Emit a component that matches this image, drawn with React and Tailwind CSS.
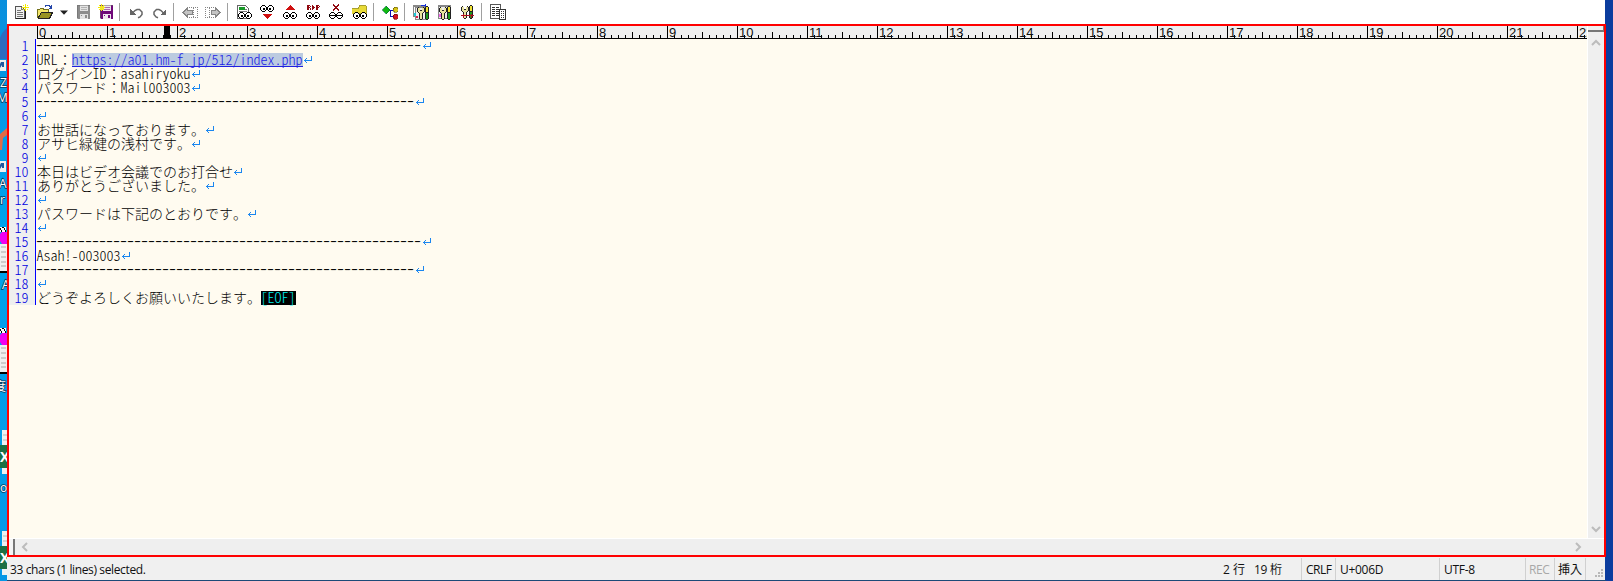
import React from 'react';

const DASH = (n) => '-'.repeat(n);

const LINES = [
  { dash: 55 },
  { parts: [['l', 'URL'], ['j', '：'], ['u', 'https://a01.hm-f.jp/512/index.php']] },
  { parts: [['j', 'ログイン'], ['l', 'ID'], ['j', '：'], ['l', 'asahiryoku']] },
  { parts: [['j', 'パスワード：'], ['l', 'Mail003003']] },
  { dash: 54 },
  {},
  { parts: [['j', 'お世話になっております。']] },
  { parts: [['j', 'アサヒ緑健の浅村です。']] },
  {},
  { parts: [['j', '本日はビデオ会議でのお打合せ']] },
  { parts: [['j', 'ありがとうございました。']] },
  {},
  { parts: [['j', 'パスワードは下記のとおりです。']] },
  {},
  { dash: 55 },
  { parts: [['l', 'Asah!-003003']] },
  { dash: 54 },
  {},
  { parts: [['j', 'どうぞよろしくお願いいたします。'], ['e', '[EOF]']], eof: true },
];

const LATIN = "inline-block -translate-x-[0.5px] -translate-y-px whitespace-pre font-['Noto_Sans_CJK_JP',monospace] text-[14px] font-light leading-[14px] [font-feature-settings:'hwid'] [font-kerning:none]";

function Return() {
  return (
    <svg className="h-[14px] w-[9px] shrink-0" viewBox="0 0 9 14" fill="none" stroke="#1a86f0" strokeWidth="1" shapeRendering="crispEdges">
      <path d="M8.5 3v5M9 7.5H1M3.5 5v1M2.5 6v1M1.5 7v1M2.5 8v1M3.5 9v1" />
    </svg>
  );
}

function Part({ kind, text }) {
  if (kind === 'j')
    return <span className="block -translate-y-px whitespace-pre font-['Noto_Sans_CJK_JP',sans-serif] text-[14px] font-light leading-[14px] [font-kerning:none] [text-spacing-trim:space-all]">{text}</span>;
  if (kind === 'u')
    return (
      <span className="flex h-[14px] border-b border-[#2020e0] bg-[#bccbe0] text-[#1c1ce6]">
        <span className={LATIN}>{text}</span>
      </span>
    );
  if (kind === 'e')
    return (
      <span className="flex h-[14px] bg-black text-[#00f0f0]">
        <span className={LATIN}>{text}</span>
      </span>
    );
  return <span className={LATIN}>{text}</span>;
}

function Line({ line, n }) {
  return (
    <div className="flex h-[14px]">
      <div className="flex w-[27px] justify-end border-r border-[#0000ff] bg-[#efefef] pr-[6px] text-[#0000e0]">
        <span className={LATIN}>{n}</span>
      </div>
      <div className="flex pl-px text-black">
        {line.dash && (
          <span className="block origin-[50%_50%] -translate-x-px -translate-y-px scale-y-[0.6] whitespace-pre font-['Liberation_Sans',sans-serif] text-[21.02px] leading-[14px]">
            {DASH(line.dash)}
          </span>
        )}
        {line.parts && line.parts.map(([k, t], i) => <Part key={i} kind={k} text={t} />)}
        {!line.eof && <Return />}
      </div>
    </div>
  );
}

function Ruler() {
  const ticks = [];
  for (let i = 0; i <= 221; i++) {
    const h = i % 10 === 0 ? 12 : i % 5 === 0 ? 6 : 3;
    ticks.push(<rect key={i} x={28 + i * 7} y={12 - h} width="1" height={h} />);
  }
  return (
    <svg className="block h-[13px] w-[1578px] shrink-0 bg-[#efefef]" viewBox="0 0 1578 13" shapeRendering="crispEdges">
      {ticks}
      <rect x="28" y="12" width="1550" height="1" />
      <rect x="155" y="0" width="6" height="12" />
      {Array.from({ length: 23 }, (_, i) => (
        <text key={i} x={30 + i * 70} y="11" fontSize="13" fontFamily="Liberation Sans" fill="#111">{i}</text>
      ))}
    </svg>
  );
}

function Icon({ children, className = '' }) {
  return (
    <svg className={'h-4 w-4 shrink-0 ' + className} viewBox="0 0 16 16" fill="none" shapeRendering="crispEdges">
      {children}
    </svg>
  );
}

const Sep = ({ className }) => <div className={'h-[18px] w-px shrink-0 bg-[#a0a0a0] ' + className} />;

function Eyes({ x = 1, y = 8, crossed }) {
  return (
    <g transform={`translate(${x} ${y})`}>
      {[0, 7].map((d) => (
        <g key={d} transform={`translate(${d} 0)`}>
          <path d="M2 0h3v1h1v1h1v3h-1v1h-1v1H2v-1H1V5H0V2h1V1h1z" fill="#000" />
          <path d="M2 1h3v1h1v3h-1v1H2V5H1V2h1z" fill="#fff" />
          {crossed ? <path d="M1 3h5v1H1z" fill="#000" /> : <path d={d ? 'M2 3h2v2H2z' : 'M3 3h2v2H3z'} fill="#000" />}
        </g>
      ))}
    </g>
  );
}

function Star({ x, y }) {
  return (
    <path transform={`translate(${x} ${y})`} d="M3.5 0v7M0 3.5h7M1 1l1 1M5 5l1 1M6 1L5 2M2 5L1 6" stroke="#f4ec00" strokeWidth="1" />
  );
}

function Floppy({ body, light }) {
  return (
    <g>
      <path d="M2 1h13v14H3l-1-1z" fill={body} />
      <path d="M5 1h8v6H5z" fill={light} />
      <path d="M6 3h6v1H6zM6 5h6v1H6z" fill={body} opacity=".55" />
      <path d="M5 10h8v5H5z" fill={light} />
      <path d="M10 11h2v3h-2zM6 11h1v1H6z" fill={body} />
      <path d="M2.5 15V1.5H15" stroke="#666" opacity=".5" />
    </g>
  );
}

function Tools() {
  return (
    <g>
      <path d="M2 3h1v4H2zM3 2h1v1H3zM8 2h1v1H8zM9 3h1v4H9zM3 7h1v1H3zM8 7h1v1H8zM4 8h1v6H4zM7 8h1v6H7zM5 14h2v1H5zM5 5h2v1H5z" fill="#222" />
      <path d="M3 3h2v3h2V3h2v4H8v1H7v6H5V8H4V7H3z" fill="#e9e4a0" />
      <path d="M10 2h1v12h-1zM13 2h1v12h-1zM11 1h2v1h-2zM11 7h2v1h-2zM11 14h2v1h-2z" fill="#222" />
      <path d="M11 2h2v5h-2z" fill="#f2e432" />
      <path d="M11 8h2v6h-2z" fill="#1c9a1c" />
    </g>
  );
}

function HArrow({ flip }) {
  return (
    <g transform={flip ? 'translate(16 0) scale(-1 1)' : undefined}>
      <path d="M1 8.5L5.500 4v2.500H10v4H5.500V13z" fill="#c4c4c4" stroke="#858585" />
      <path d="M7 3.500h8.500v10H7" stroke="#858585" strokeDasharray="1 1" />
      <path d="M11.500 4v10" stroke="#858585" strokeDasharray="1 1" />
    </g>
  );
}

function Undo() {
  return (
    <g>
      <path d="M3.500 9L6 6.500l2-1h2.500L13 8v2.500L11 13l-2 .8" stroke="#666" strokeWidth="1.500" shapeRendering="auto" />
      <path d="M1 5v6h6z" fill="#666" />
    </g>
  );
}

function Toolbar() {
  return (
    <div className="flex h-6 items-center bg-white pl-[7px]">
      <Icon>
        <path d="M1.500 2.500h6l3 3v9h-9z" fill="#f3f3f3" stroke="#555" />
        <path d="M7.500 2.500v3h3M3 6.500h4M3 8.500h6M3 10.500h6M3 12.500h6" stroke="#777" />
        <path d="M2 14.500h9.500V6" stroke="#222" />
        <Star x={8} y={0} />
      </Icon>
      <Icon className="ml-[7px]">
        <path d="M0 5h2l1-1h4v1h5v4H4l-3 5H0z" fill="#f4e66a" />
        <path d="M.5 14V5.500h2l1-1h3v1h5V8" stroke="#73701c" />
        <path d="M1 14l3-6h12l-4 6z" fill="#999321" />
        <path d="M1 14.500h11.500L15.500 8.500H4.500L1 14" stroke="#222" />
        <path d="M8 2.500l1-1h3l2 2M14.500 1v4M12 4.500h3" stroke="#2446a8" />
      </Icon>
      <svg className="ml-[7px] h-[5px] w-2 shrink-0" viewBox="0 0 8 5"><path d="M0 .5h8L4 4.800z" fill="#222" /></svg>
      <Icon className="ml-[7px]"><Floppy body="#8c8c8c" light="#e2e2e2" /></Icon>
      <Icon className="ml-[7px]">
        <Floppy body="#6f0878" light="#eee6ee" />
        <Star x={0} y={0} />
        <path d="M2 2h4v4H2z" fill="#f2e526" />
      </Icon>
      <Sep className="ml-[5px]" />
      <Icon className="ml-[9px]"><Undo /></Icon>
      <Icon className="ml-[7px]">
        <g transform="translate(15 0) scale(-1 1)"><Undo /></g>
      </Icon>
      <Sep className="ml-[5px]" />
      <Icon className="ml-[8px]"><HArrow /></Icon>
      <Icon className="ml-[7px]"><HArrow flip /></Icon>
      <Sep className="ml-[6px]" />
      <Icon className="ml-[8px]">
        <path d="M1.500 1.500h8l3 3v10h-11z" fill="#fff" stroke="#666" />
        <path d="M3 5.500h8M3 7.500h8M3 9.500h4M3 11.500h2" stroke="#777" />
        <path d="M3 3h6v3H3z" fill="#189928" />
        <Eyes x={2} y={8} />
      </Icon>
      <Icon className="ml-[7px]"><Eyes y={1} /><path d="M3 10h11l-5.500 5z" fill="#d01010" /></Icon>
      <Icon className="ml-[7px]"><Eyes y={8} /><path d="M3 6h11L8.500 1z" fill="#d01010" /></Icon>
      <Icon className="ml-[7px]">
        <Eyes y={8} />
        <path d="M2 1h3v1h1v1H5v1h1v2H5V4H4v2H2zM7 1h1v1h1v1h1v1H9v1H8v1H7zM11 1h3v1h1v1h-1v1h-1v2h-2z" fill="#900810" />
        <path d="M4 2h1v1H4zM13 2h1v1h-1z" fill="#fff" />
      </Icon>
      <Icon className="ml-[7px]"><Eyes y={8} crossed /><path d="M5 1l6 5M11 1L5 6" stroke="#900810" strokeWidth="1.500" /></Icon>
      <Icon className="ml-[7px]">
        <path d="M1 4h6l2-3h6v9H1z" fill="#e8da38" />
        <path d="M1 4.500h6l2-3h6M15.500 2v8M2 9.500h13" stroke="#a8a030" />
        <Eyes y={8} x={2} />
      </Icon>
      <Sep className="ml-[6px]" />
      <Icon className="ml-[8px]">
        <path d="M7 6.500h4M8.500 6v6.500H12" stroke="#1010b0" />
        <path d="M4 2l4 4-4 4-4-4z" fill="#10b810" stroke="#064" strokeWidth=".6" />
        <path d="M12 3h3v1h1v3h-1v1h-3V7h-1V4h1z" fill="#d8c418" stroke="#665b00" strokeWidth=".6" />
        <path d="M12 10h3v1h1v3h-1v1h-3v-1h-1v-3h1z" fill="#d01020" stroke="#700" strokeWidth=".6" />
      </Icon>
      <Sep className="ml-[6px]" />
      <Icon className="ml-[8px]">
        <path d="M.5 1.500h11v11H.5z" fill="#fff" stroke="#888" />
        <path d="M0 1h11v2H0z" fill="#888" />
        <path d="M2.500 3.500h11v12h-11z" fill="#eee" stroke="#888" />
        <path d="M8 1.500h5M12.500 0v4" stroke="#1830d8" />
        <path d="M1 9h2v3H1z" fill="#20c8d8" />
        <path d="M3 12h2v2H3z" fill="#e02050" />
        <g transform="translate(2 1)"><Tools /></g>
      </Icon>
      <Icon className="ml-[7px]">
        <path d="M2.500 1.500h12v13h-12z" fill="#eee" stroke="#888" />
        <path d="M2 1h13v2H2z" fill="#888" />
        <path d="M3 10h3v3H3z" fill="#f060e8" />
        <g transform="translate(1 1)"><Tools /></g>
      </Icon>
      <Icon className="ml-[7px]">
        <Tools />
        <path d="M2 11.500h13M4.500 10v4M12.500 10v4" stroke="#b01020" />
      </Icon>
      <Sep className="ml-[6px]" />
      <Icon className="ml-[8px]">
        <path d="M.5 .5h10v14H.5z" fill="#fff" stroke="#555" />
        <path d="M2 3.500h7M2 5.500h7M2 7.500h7M2 9.500h7M2 11.500h7" stroke="#333" strokeDasharray="3 1" />
        <path d="M9.500 5.500h6v10h-6z" fill="#fff" stroke="#333" />
        <path d="M11 7.500h4M11 9.500h4M11 11.500h4M11 13.500h4" stroke="#333" strokeDasharray="1 1" />
      </Icon>
    </div>
  );
}

function ShortcutBadge({ y }) {
  return (
    <g transform={`translate(0 ${y})`}>
      <path d="M0 0h6v11H0z" fill="#f0f0f0" />
      <path d="M1 2h3v5H2V5L0 8V4z" fill="#2058a0" />
    </g>
  );
}

function NoteIcon({ y }) {
  return (
    <g transform={`translate(0 ${y})`}>
      <path d="M0 0h6v5H0z" fill="#fff" />
      <path d="M0 1h1v2H0zM2 0h2v1H2zM4 1h1v2H4zM1 3h1v2H1zM5 3h1v2H5z" fill="#000" />
      <path d="M2 5h5v12H2L0 14V7z" fill="#f000f0" />
      <path d="M0 17h7v27H0z" fill="#f0f0f0" />
      <path d="M1 20h5M1 25h5M1 30h5M1 35h5M1 39h5" stroke="#aaa" />
      <path d="M0 44h7v2H0z" fill="#000" />
    </g>
  );
}

function SheetIcon({ y }) {
  return (
    <g transform={`translate(0 ${y})`}>
      <path d="M2 0h5v44H2z" fill="#eef2f2" />
      <path d="M3 5h4M3 10h4" stroke="#b0b8b8" />
      <path d="M0 15h7v23H0z" fill="#1d7044" />
      <text x="0" y="32" fontSize="14" fontWeight="700" fontFamily="Open Sans" fill="#fff">X</text>
    </g>
  );
}

function Desktop() {
  const t = { fontSize: 12, fontFamily: 'Open Sans, Noto Sans CJK JP', fill: '#fff', stroke: '#063a60', strokeWidth: 1.5, paintOrder: 'stroke' };
  return (
    <svg className="block h-[581px] w-[7px] shrink-0" viewBox="0 0 7 581">
      <defs>
        <linearGradient id="sky" x1="0" y1="0" x2="0" y2="1">
          <stop offset="0" stopColor="#0a8fdd" />
          <stop offset=".4" stopColor="#00a2ec" />
          <stop offset="1" stopColor="#0597e6" />
        </linearGradient>
      </defs>
      <path d="M0 0h7v581H0z" fill="url(#sky)" />
      <path d="M7 28Q2 32 0 38v21h7z" fill="#2d6cc0" />
      <ShortcutBadge y={60} />
      <text {...t} x="0" y="87">Z</text>
      <text {...t} x="-3" y="102">M</text>
      <path d="M7 128v7l-4 3-1 12H0v-16z" fill="#e06a48" />
      <ShortcutBadge y={161} />
      <text {...t} x="-1" y="188">A</text>
      <text {...t} x="0" y="204">r</text>
      <NoteIcon y={227} />
      <text {...t} x="2" y="289">A</text>
      <NoteIcon y={328} />
      <text {...t} x="-6" y="391">度</text>
      <SheetIcon y={430} />
      <text {...t} x="0" y="492">o</text>
      <SheetIcon y={531} />
    </svg>
  );
}

const CHEVRON = 'M1 1l4 4 4-4';

function Cell({ className, children }) {
  return <div className={'flex h-[22px] shrink-0 items-center whitespace-pre border-[#d0d0d0] pt-[2px] ' + className}>{children}</div>;
}

export default function App() {
  return (
    <div className="flex h-[581px] w-[1613px] overflow-hidden bg-[#0b3c9e]">
      <Desktop />
      <div className="flex w-[1599px] shrink-0 flex-col">
        <div className="w-[1598px]"><Toolbar /></div>
        <div className="flex h-[533px] shrink-0 flex-col border-2 border-[#ff0000] bg-[#efefef]">
          <div className="flex h-[512px] shrink-0">
            <div className="flex w-[1578px] shrink-0 flex-col overflow-hidden bg-[#fffbf0]">
              <Ruler />
              {LINES.map((l, i) => <Line key={i} line={l} n={i + 1} />)}
            </div>
            <div className="flex flex-1 flex-col items-center justify-between border-l border-white pb-[5px]">
              <div className="flex w-full flex-col items-center">
                <div className="h-[6px] w-full border-b-2 border-r border-[#777] bg-[#f0f0f0]" />
                <svg className="mt-[7px] h-[7px] w-[10px]" viewBox="0 0 10 7" fill="none" stroke="#bcbcbc" strokeWidth="2"><path d="M1 6l4-4 4 4" /></svg>
              </div>
              <svg className="h-[7px] w-[10px]" viewBox="0 0 10 7" fill="none" stroke="#bcbcbc" strokeWidth="2"><path d={CHEVRON} /></svg>
            </div>
          </div>
          <div className="flex flex-1 items-center justify-between border-t border-white pr-[22px]">
            <div className="flex h-full items-center">
              <div className="h-full w-[6px] border-r-2 border-[#777] bg-[#f5f5f5]" />
              <svg className="ml-[6px] h-[10px] w-[7px]" viewBox="0 0 7 10" fill="none" stroke="#bcbcbc" strokeWidth="2"><path d="M6 1L2 5l4 4" /></svg>
            </div>
            <svg className="h-[10px] w-[7px]" viewBox="0 0 7 10" fill="none" stroke="#bcbcbc" strokeWidth="2"><path d="M1 1l4 4-4 4" /></svg>
          </div>
        </div>
        <div className="flex h-[23px] w-[1598px] shrink-0 items-center bg-[#f0f0f0] font-['Open_Sans','Noto_Sans_CJK_JP',sans-serif] text-[12px] leading-[16px] text-[#111]">
          <Cell className="flex-1 pl-[3px] tracking-[-0.37px]">33 chars (1 lines) selected.</Cell>
          <Cell className="w-[31px]">2 行</Cell>
          <Cell className="w-[48px] border-r tracking-[-0.3px]">19 桁</Cell>
          <Cell className="w-[34px] border-r pl-1 tracking-[-0.5px]">CRLF</Cell>
          <Cell className="w-[104px] border-r pl-1 tracking-[-0.3px]">U+006D</Cell>
          <Cell className="w-[86px] border-r pl-1 tracking-[-0.3px]">UTF-8</Cell>
          <Cell className="w-[28px] pl-[3px] tracking-[-0.4px] text-[#a8a8a8]">REC</Cell>
          <Cell className="w-[32px] border-x pl-[3px]">挿入</Cell>
          <div className="flex h-full w-[19px] shrink-0 items-end justify-end pb-[3px] pr-[2px]">
            <svg className="h-2 w-2" viewBox="0 0 8 8" fill="#b8b8b8"><path d="M6 0h2v2H6zM3 3h2v2H3zM6 3h2v2H6zM0 6h2v2H0zM3 6h2v2H3zM6 6h2v2H6z" /></svg>
          </div>
        </div>
        <div className="h-px w-full shrink-0 bg-[#1c4a78]" />
      </div>
    </div>
  );
}
